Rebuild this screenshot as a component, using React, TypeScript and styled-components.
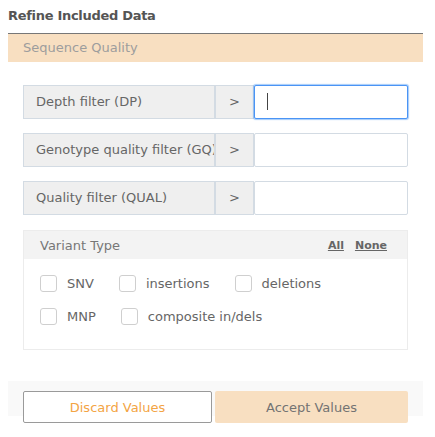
import React from "react";
import styled, { createGlobalStyle } from "styled-components";

const Global = createGlobalStyle`
  html, body { margin: 0; padding: 0; background: #fff; }
  body { padding: 8px; font-family: "DejaVu Sans", "Liberation Sans", sans-serif; font-size: 13px; }
  * { box-sizing: border-box; }
`;

const Panel = styled.div`
  width: 415px;
  display: flex;
  flex-direction: column;
`;

const Title = styled.div`
  font-weight: bold;
  font-size: 13px;
  letter-spacing: -0.3px;
  line-height: 16px;
  color: #555;
  padding-bottom: 9px;
  border-bottom: 1px solid #777;
`;

const SectionBand = styled.div`
  height: 28px;
  line-height: 28px;
  background: #f8dfc1;
  color: #9d9d9d;
  padding-left: 15px;
`;

const Body = styled.div`
  padding: 23px 15px 0 15px;
  display: flex;
  flex-direction: column;
  gap: 14px;
`;

const FilterRow = styled.div`
  display: flex;
  height: 34px;
`;

const AddOn = styled.div<{ $w: number; $center?: boolean }>`
  width: ${(p) => p.$w}px;
  flex: none;
  background: #efefef;
  border: 1px solid #d3dbe3;
  color: #666;
  line-height: 32px;
  padding: 0 ${(p) => (p.$center ? 0 : 12)}px;
  text-align: ${(p) => (p.$center ? "center" : "left")};
  white-space: nowrap;
  overflow: hidden;
`;

const InputWrap = styled.div`
  position: relative;
  flex: 1;
  display: flex;
`;

const Field = styled.input<{ $focused?: boolean }>`
  flex: 1;
  width: 100%;
  height: 100%;
  border: 1px solid ${(p) => (p.$focused ? "#4a94f5" : "#d3dbe3")};
  box-shadow: ${(p) => (p.$focused ? "0 0 1px 1px rgba(90,160,245,0.55)" : "none")};
  border-radius: 2px;
  outline: none;
  background: #fff;
  font: inherit;
  padding: 0 12px;
`;

const Caret = styled.span`
  position: absolute;
  left: 13px;
  top: 8px;
  width: 1px;
  height: 17px;
  background: #444;
`;

const TypeBox = styled.div`
  margin-top: 1px;
  border: 1px solid #ececec;
  display: flex;
  flex-direction: column;
`;

const TypeHeader = styled.div`
  height: 28px;
  background: #f3f3f3;
  display: flex;
  align-items: center;
  justify-content: space-between;
  padding: 0 20px 0 16px;
  color: #777;
`;

const Links = styled.div`
  display: flex;
  gap: 11px;
`;

const Link = styled.a`
  font-size: 11px;
  font-weight: bold;
  color: #666;
  text-decoration: underline;
  cursor: pointer;
`;

const TypeBody = styled.div`
  padding: 15px 16px 23px 16px;
  display: flex;
  flex-direction: column;
  gap: 14px;
`;

const CheckRow = styled.div`
  display: flex;
  gap: 25px;
  height: 19px;
  align-items: center;
`;

const CheckItem = styled.label`
  display: flex;
  align-items: center;
  gap: 10px;
  color: #666;
  cursor: pointer;
`;

const Box = styled.span`
  width: 17px;
  height: 17px;
  border: 1px solid #cfcfcf;
  border-radius: 3px;
  background: #fff;
  display: inline-block;
`;

const Footer = styled.div`
  margin-top: 31px;
  height: 35px;
  background: #f9f9f9;
  padding: 10px 15px 0 15px;
  display: flex;
  gap: 3px;
  align-items: flex-start;
`;

const Button = styled.button<{ $primary?: boolean }>`
  height: 32px;
  flex: none;
  width: ${(p) => (p.$primary ? 193 : 189)}px;
  font: inherit;
  font-size: 13px;
  border-radius: 2px;
  cursor: pointer;
  border: ${(p) => (p.$primary ? "none" : "1px solid #9a9a9a")};
  background: ${(p) => (p.$primary ? "#f8dfc1" : "#fff")};
  color: ${(p) => (p.$primary ? "#737373" : "#f3a444")};
`;

const filters = [
  { label: "Depth filter (DP)", focused: true },
  { label: "Genotype quality filter (GQ)", focused: false },
  { label: "Quality filter (QUAL)", focused: false },
];

const rows = [
  ["SNV", "insertions", "deletions"],
  ["MNP", "composite in/dels"],
];

export default function App() {
  return (
    <>
      <Global />
      <Panel>
        <Title>Refine Included Data</Title>
        <SectionBand>Sequence Quality</SectionBand>
        <Body>
          {filters.map((f) => (
            <FilterRow key={f.label}>
              <AddOn $w={192}>{f.label}</AddOn>
              <AddOn $w={39} $center>
                &gt;
              </AddOn>
              <InputWrap>
                <Field $focused={f.focused} />
                {f.focused && <Caret />}
              </InputWrap>
            </FilterRow>
          ))}
          <TypeBox>
            <TypeHeader>
              <span>Variant Type</span>
              <Links>
                <Link>All</Link>
                <Link>None</Link>
              </Links>
            </TypeHeader>
            <TypeBody>
              {rows.map((r, i) => (
                <CheckRow key={i}>
                  {r.map((t) => (
                    <CheckItem key={t}>
                      <Box />
                      {t}
                    </CheckItem>
                  ))}
                </CheckRow>
              ))}
            </TypeBody>
          </TypeBox>
        </Body>
        <Footer>
          <Button>Discard Values</Button>
          <Button $primary>Accept Values</Button>
        </Footer>
      </Panel>
    </>
  );
}
